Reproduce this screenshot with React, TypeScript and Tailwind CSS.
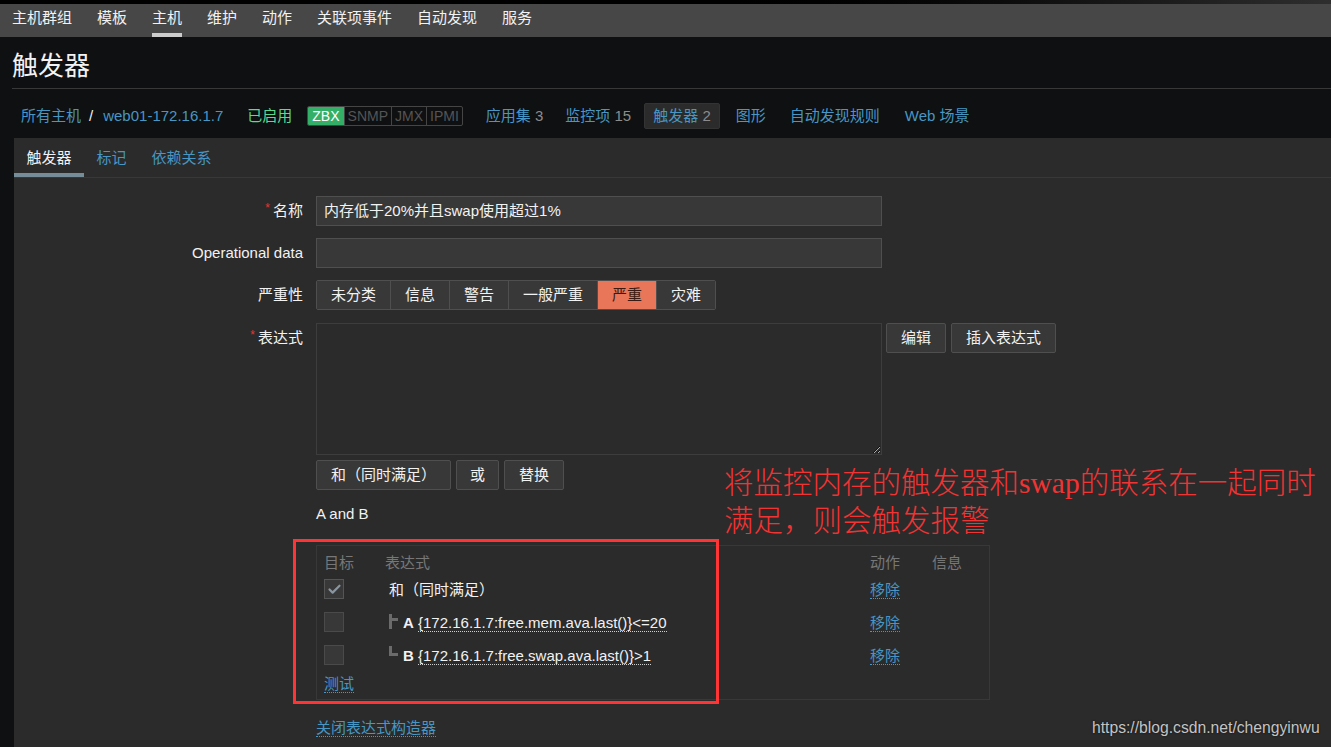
import { Check } from 'lucide-react';

const navItems = ['主机群组', '模板', '主机', '维护', '动作', '关联项事件', '自动发现', '服务'];
const severities = ['未分类', '信息', '警告', '一般严重', '严重', '灾难'];

const Tree = ({ last }: { last?: boolean }) => (
  <svg width="14" height="22" viewBox="0 0 14 22" className="shrink-0">
    {last ? (
      <>
        <rect x="0" y="1" width="3" height="10" fill="#6b6b6b" />
        <rect x="0" y="8" width="9" height="3" fill="#6b6b6b" />
      </>
    ) : (
      <>
        <rect x="0" y="2" width="3" height="15" fill="#6b6b6b" />
        <rect x="3" y="6" width="6" height="3" fill="#6b6b6b" />
      </>
    )}
  </svg>
);

const Btn = ({ children, className = 'px-[14px]' }: { children: React.ReactNode; className?: string }) => (
  <button className={`h-[30px] bg-[#383838] border border-[#4f4f4f] rounded-[2px] text-[#f2f2f2] ${className}`}>
    {children}
  </button>
);

export default function App() {
  return (
    <div className="relative h-[747px] flex flex-col overflow-hidden bg-[#0e1012] text-[15px] text-[#f2f2f2] [font-family:'Liberation_Sans','Noto_Sans_CJK_SC',sans-serif]">
      {/* top menu */}
      <div className="h-[4px] bg-gradient-to-r from-black via-black to-[#2e2e2e]" />
      <nav className="h-[33px] bg-[#474747] flex pl-[12px] gap-[25px]">
        {navItems.map((n) => (
          <a key={n} className={`h-full flex items-center border-b-[4px] ${n === '主机' ? 'border-[#cdcdcd]' : 'border-transparent'}`}>
            {n}
          </a>
        ))}
      </nav>

      {/* title */}
      <div className="ml-[12px] pt-[14px] pb-[7px] border-b border-[#383838]">
        <h1 className="text-[26px] leading-[30px]">触发器</h1>
      </div>

      {/* host navigation */}
      <div className="pt-[14px] pb-[9px] pl-[21px]">
        <div className="h-[26px] flex items-center whitespace-nowrap">
          <a className="text-[#4796c4]">所有主机</a>
          <span className="ml-[8px] mr-[10px]">/</span>
          <a className="text-[#4796c4]">web01-172.16.1.7</a>
          <span className="ml-[24px] text-[#59db8f]">已启用</span>
          <div className="ml-[15px] flex h-[20px] text-[14px] leading-[18px] border border-[#454545] rounded-[2px] overflow-hidden">
            <span className="px-[4px] bg-[#34af67] text-white">ZBX</span>
            <span className="px-[3px] text-[#555] border-l border-[#454545]">SNMP</span>
            <span className="px-[3px] text-[#555] border-l border-[#454545]">JMX</span>
            <span className="px-[3px] text-[#555] border-l border-[#454545]">IPMI</span>
          </div>
          <span className="ml-[23px]"><a className="text-[#4796c4]">应用集</a> <span className="text-[#8c8c8c]">3</span></span>
          <span className="ml-[22px]"><a className="text-[#4796c4]">监控项</a> <span className="text-[#8c8c8c]">15</span></span>
          <span className="ml-[13px] h-[26px] px-[8px] flex items-center bg-[#2b2b2b] border border-[#333] rounded-[2px]">
            <a className="text-[#4796c4]">触发器</a>&nbsp;<span className="text-[#8c8c8c]">2</span>
          </span>
          <a className="ml-[16px] text-[#4796c4]">图形</a>
          <a className="ml-[24px] text-[#4796c4]">自动发现规则</a>
          <a className="ml-[25px] text-[#4796c4]">Web 场景</a>
        </div>
      </div>

      {/* main panel */}
      <div className="ml-[14px] flex-1 bg-[#2b2b2b] flex flex-col">
        <div className="flex border-b border-[#383838]">
          <div className="h-[39px] pt-[6px] px-[12.5px] flex items-center border-b-[4px] border-[#768d99]">触发器</div>
          <div className="h-[39px] pt-[6px] px-[12.5px] flex items-center border-b-[4px] border-transparent text-[#4796c4]">标记</div>
          <div className="h-[39px] pt-[6px] px-[12.5px] flex items-center border-b-[4px] border-transparent text-[#4796c4]">依赖关系</div>
        </div>

        <div className="pt-[18px] flex flex-col">
          {/* name */}
          <div className="flex gap-[13px]">
            <label className="w-[289px] h-[30px] flex items-center justify-end">
              <span className="text-[#e33734] text-[12px] mr-[3px] -mt-[6px]">*</span>名称
            </label>
            <div className="w-[566px] h-[30px] px-[7px] flex items-center bg-[#383838] border border-[#4f4f4f]">内存低于20%并且swap使用超过1%</div>
          </div>

          {/* operational data */}
          <div className="mt-[12px] flex gap-[13px]">
            <label className="w-[289px] h-[30px] flex items-center justify-end">Operational data</label>
            <div className="w-[566px] h-[30px] bg-[#383838] border border-[#4f4f4f]" />
          </div>

          {/* severity */}
          <div className="mt-[12px] flex gap-[13px]">
            <label className="w-[289px] h-[30px] flex items-center justify-end">严重性</label>
            <div className="flex h-[30px] border border-[#4f4f4f] rounded-[2px] overflow-hidden">
              {severities.map((s, i) => (
                <span
                  key={s}
                  className={`px-[14px] flex items-center ${i > 0 ? 'border-l border-[#4f4f4f]' : ''} ${s === '严重' ? 'bg-[#e97659] text-[#3a1a12]' : 'bg-[#383838]'}`}
                >
                  {s}
                </span>
              ))}
            </div>
          </div>

          {/* expression */}
          <div className="mt-[13px] flex gap-[13px]">
            <label className="w-[289px] h-[30px] flex items-center justify-end">
              <span className="text-[#e33734] text-[12px] mr-[3px] -mt-[6px]">*</span>表达式
            </label>
            <div className="flex flex-col">
              <div className="flex items-start">
                <textarea readOnly className="w-[566px] h-[132px] bg-[#2b2b2b] border border-[#3d3d3d] outline-none [color-scheme:dark]" />
                <div className="ml-[4px] flex gap-[5px]">
                  <Btn>编辑</Btn>
                  <Btn>插入表达式</Btn>
                </div>
              </div>
              <div className="mt-[5px] flex gap-[5px]">
                <Btn>和（同时满足）</Btn>
                <Btn className="px-[13px]">或</Btn>
                <Btn>替换</Btn>
              </div>
              <div className="mt-[15px] h-[18px] leading-[18px]">A and B</div>

              {/* expression constructor */}
              <div className="relative mt-[22px] w-[674px] border border-[#383838] pt-[5px] px-[7px] pb-[6px]">
                <div className="grid grid-cols-[61px_485px_62px_1fr] h-[25px] items-center text-[#777]">
                  <span>目标</span>
                  <span>表达式</span>
                  <span>动作</span>
                  <span>信息</span>
                </div>
                {[0, 1, 2].map((r) => (
                  <div key={r} className="grid grid-cols-[61px_485px_62px_1fr] h-[33px] pt-[3px] items-start">
                    <span className={`w-[20px] h-[20px] flex items-center justify-center bg-[#383838] border ${r === 0 ? 'border-[#555]' : 'border-[#4a4a4a]'}`}>
                      {r === 0 && <Check size={15} strokeWidth={3.5} color="#8896a2" />}
                    </span>
                    <span className="h-[22px] flex items-center pl-[4px] whitespace-nowrap">
                      {r === 0 && <span>和（同时满足）</span>}
                      {r > 0 && (
                        <>
                          <Tree last={r === 2} />
                          <b className="font-bold">{r === 1 ? 'A' : 'B'}</b>
                          <span>&nbsp;</span>
                          <span className="inline-block leading-[17px] border-b border-dotted border-[#d0d0d0]">
                            {r === 1 ? '{172.16.1.7:free.mem.ava.last()}<=20' : '{172.16.1.7:free.swap.ava.last()}>1'}
                          </span>
                        </>
                      )}
                    </span>
                    <span className="h-[22px] flex items-center">
                      <a className="inline-block leading-[17px] text-[#4796c4] border-b border-dotted border-[#4796c4]">移除</a>
                    </span>
                    <span />
                  </div>
                ))}
                <div className="h-[18px] flex items-center">
                  <a className="inline-block leading-[16px] text-[#4796c4] border-b border-dotted border-[#4796c4]">测试</a>
                </div>

                {/* annotation frame */}
                <div className="absolute -left-[24px] -top-[7px] w-[426px] h-[165px] border-[3px] border-[#ff3535] pointer-events-none" />
              </div>

              <div className="mt-[19px] h-[18px] flex items-center">
                <a className="inline-block leading-[16px] text-[#4796c4] border-b border-dotted border-[#4796c4]">关闭表达式构造器</a>
              </div>
            </div>
          </div>
        </div>
      </div>

      {/* annotation text */}
      <div className="absolute left-[724px] top-[463px] text-[29.5px] leading-[35px] text-[#f23333] whitespace-nowrap font-extralight [font-family:'Noto_Sans_CJK_SC',serif]">
        将监控内存的触发器和<span className="font-normal [font-family:'Liberation_Serif',serif]">swap</span>的联系在一起同时
        <br />
        满足，则会触发报警
      </div>

      {/* watermark */}
      <div className="absolute left-[1092px] top-[719px] text-[15.7px] leading-[18px] text-[#c4c4c4] [text-shadow:0_0_2px_#111]">
        https://blog.csdn.net/chengyinwu
      </div>
    </div>
  );
}
